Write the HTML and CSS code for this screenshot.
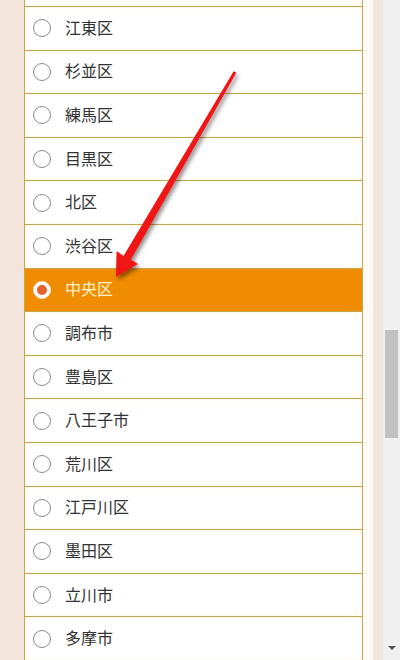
FILE: index.html
```html
<!DOCTYPE html>
<html lang="ja">
<head>
<meta charset="utf-8">
<link rel="stylesheet" href="styles.css">
</head>
<body>
<div class="page">
  <div class="side-left"></div>
  <div class="main">
    <ul class="list">
      <li class="row partial"></li>
      <li class="row"><span class="radio"></span><span class="label">江東区</span></li>
      <li class="row"><span class="radio"></span><span class="label">杉並区</span></li>
      <li class="row"><span class="radio"></span><span class="label">練馬区</span></li>
      <li class="row"><span class="radio"></span><span class="label">目黒区</span></li>
      <li class="row"><span class="radio"></span><span class="label">北区</span></li>
      <li class="row"><span class="radio"></span><span class="label">渋谷区</span></li>
      <li class="row selected"><span class="radio"></span><span class="label">中央区</span></li>
      <li class="row"><span class="radio"></span><span class="label">調布市</span></li>
      <li class="row"><span class="radio"></span><span class="label">豊島区</span></li>
      <li class="row"><span class="radio"></span><span class="label">八王子市</span></li>
      <li class="row"><span class="radio"></span><span class="label">荒川区</span></li>
      <li class="row"><span class="radio"></span><span class="label">江戸川区</span></li>
      <li class="row"><span class="radio"></span><span class="label">墨田区</span></li>
      <li class="row"><span class="radio"></span><span class="label">立川市</span></li>
      <li class="row"><span class="radio"></span><span class="label">多摩市</span></li>
      <li class="row partial"></li>
    </ul>
    <svg class="arrow" width="340" height="300" viewBox="0 0 340 300">
      <defs>
        <filter id="sh" x="-20%" y="-20%" width="140%" height="140%">
          <feGaussianBlur in="SourceAlpha" stdDeviation="2"/>
          <feOffset dx="2" dy="3" result="b"/>
          <feComponentTransfer><feFuncA type="linear" slope="0.45"/></feComponentTransfer>
          <feMerge><feMergeNode/><feMergeNode in="SourceGraphic"/></feMerge>
        </filter>
      </defs>
      <polygon filter="url(#sh)" fill="#f01414" points="212.3,72.8 107,259.5 114,264 92,277 92.6,251 99.5,256 209.7,71.2"/>
    </svg>
  </div>
  <div class="gap-light"></div>
  <div class="side-right"></div>
  <div class="scrollbar">
    <div class="thumb"></div>
    <div class="down"></div>
  </div>
</div>
</body>
</html>
```

FILE: styles.css
```css
html, body {
  margin: 0;
  padding: 0;
  width: 400px;
  height: 660px;
  overflow: hidden;
  background: #fff;
}
.page {
  display: flex;
  width: 400px;
  height: 660px;
  font-family: "Noto Sans CJK JP", "Noto Sans", sans-serif;
}
.side-left {
  width: 24px;
  flex: none;
  background: #f3e5dc;
}
.main {
  position: relative;
  width: 339px;
  flex: none;
  overflow: hidden;
  background: #fffef8;
}
.list {
  list-style: none;
  margin: -37.6px 0 0 0;
  padding: 0;
}
.row {
  display: flex;
  align-items: center;
  height: 42.6px;
  border: 1px solid #c4a554;
  border-bottom: none;
  background: #fff;
  box-shadow: inset 0 0 3px #fff3c8;
  font-size: 16px;
  color: #333;
}
.radio {
  width: 16px;
  height: 16px;
  border: 1px solid #8a8a8a;
  border-radius: 50%;
  background: #fff;
  margin-left: 8px;
  flex: none;
  display: flex;
  align-items: center;
  justify-content: center;
}
.label {
  margin-left: 14px;
  margin-bottom: 3px;
  line-height: 1;
}
.row.selected {
  background: #ef8c00;
  box-shadow: none;
  color: #fff0cc;
}
.row.selected .radio {
  border-color: #f7e9d8;
  background: #fff;
}
.row.selected .radio::after {
  content: "";
  width: 10px;
  height: 10px;
  border-radius: 50%;
  background: #e2622b;
}
.arrow {
  position: absolute;
  left: 0;
  top: 0;
}
.gap-light {
  width: 10px;
  flex: none;
  background: #fdfaf7;
}
.side-right {
  width: 10px;
  flex: none;
  background: #f3e5dc;
}
.scrollbar {
  position: relative;
  width: 17px;
  flex: none;
  background: #f0f0f0;
}
.thumb {
  position: absolute;
  left: 2px;
  top: 330px;
  width: 13px;
  height: 108px;
  background: #c1c1c1;
}
.down {
  position: absolute;
  left: 5px;
  top: 646px;
  width: 0;
  height: 0;
  border-left: 4px solid transparent;
  border-right: 4px solid transparent;
  border-top: 4px solid #505050;
}
```
